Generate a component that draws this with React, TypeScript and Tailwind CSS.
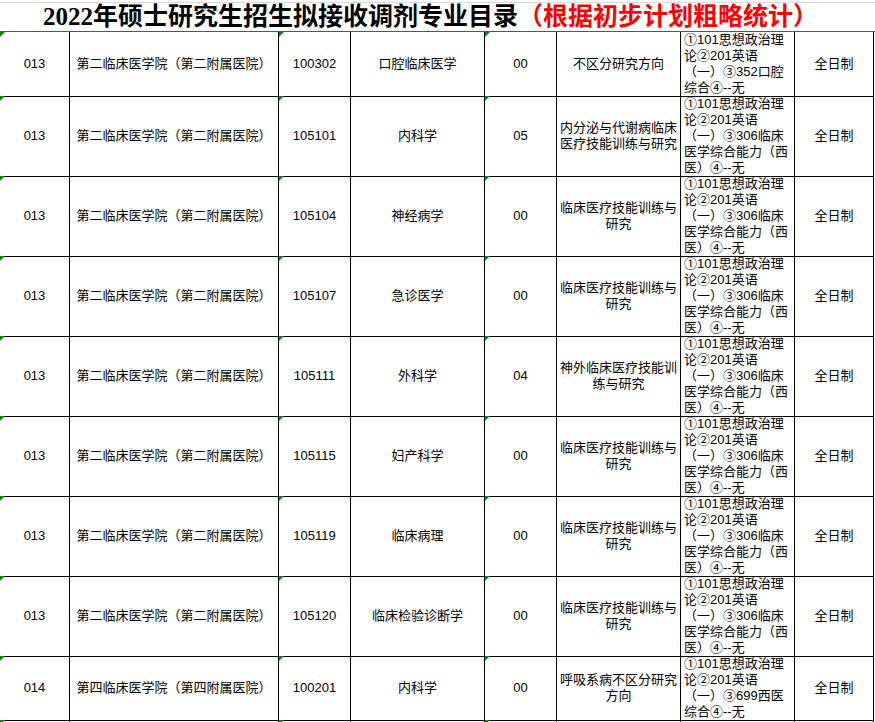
type Row = {
  dept: string
  school: string
  code: string
  major: string
  dir: string
  field: string[]
  exam: string[]
  mode: string
  tall: boolean
}

const exam306 = ["①101思想政治理", "论②201英语", "（一）③306临床", "医学综合能力（西", "医）④--无"]
const er = "第二临床医学院（第二附属医院）"

const rows: Row[] = [
  { dept: "013", school: er, code: "100302", major: "口腔临床医学", dir: "00", field: ["不区分研究方向"], exam: ["①101思想政治理", "论②201英语", "（一）③352口腔", "综合④--无"], mode: "全日制", tall: false },
  { dept: "013", school: er, code: "105101", major: "内科学", dir: "05", field: ["内分泌与代谢病临床", "医疗技能训练与研究"], exam: exam306, mode: "全日制", tall: true },
  { dept: "013", school: er, code: "105104", major: "神经病学", dir: "00", field: ["临床医疗技能训练与", "研究"], exam: exam306, mode: "全日制", tall: true },
  { dept: "013", school: er, code: "105107", major: "急诊医学", dir: "00", field: ["临床医疗技能训练与", "研究"], exam: exam306, mode: "全日制", tall: true },
  { dept: "013", school: er, code: "105111", major: "外科学", dir: "04", field: ["神外临床医疗技能训", "练与研究"], exam: exam306, mode: "全日制", tall: true },
  { dept: "013", school: er, code: "105115", major: "妇产科学", dir: "00", field: ["临床医疗技能训练与", "研究"], exam: exam306, mode: "全日制", tall: true },
  { dept: "013", school: er, code: "105119", major: "临床病理", dir: "00", field: ["临床医疗技能训练与", "研究"], exam: exam306, mode: "全日制", tall: true },
  { dept: "013", school: er, code: "105120", major: "临床检验诊断学", dir: "00", field: ["临床医疗技能训练与", "研究"], exam: exam306, mode: "全日制", tall: true },
  { dept: "014", school: "第四临床医学院（第四附属医院）", code: "100201", major: "内科学", dir: "00", field: ["呼吸系病不区分研究", "方向"], exam: ["①101思想政治理", "论②201英语", "（一）③699西医", "综合④--无"], mode: "全日制", tall: false },
]

const cols = "grid grid-cols-[70px_209px_72px_134px_72px_124px_114px_79px]"

function Flag() {
  return (
    <span className="absolute left-0 top-0 h-0 w-0 border-r-[5px] border-t-[5px] border-r-transparent border-t-[#0a8a0a]" />
  )
}

function Cell({ children, flag }: { children?: React.ReactNode; flag?: boolean }) {
  return (
    <div className="relative flex items-center justify-center border-b border-r border-black text-center">
      {flag && <Flag />}
      {children}
    </div>
  )
}

export default function App() {
  return (
    <div
      className="h-[722px] w-[875px] overflow-hidden bg-white text-[13px] leading-[16px] text-black"
      style={{ fontFamily: '"Liberation Sans", "Noto Sans CJK SC", sans-serif' }}
    >
      <div className="relative flex h-[32px] items-center justify-center border-b border-[#555] pr-[14px]">
        <div className="absolute left-0 right-0 top-[2px] border-t border-[#d9d9d9]" />
        <div
          className="relative pt-[2px] text-[25px] font-bold leading-[28px]"
          style={{ fontFamily: '"Liberation Serif", "Noto Sans CJK SC", serif' }}
        >
          <span>2022年硕士研究生招生拟接收调剂专业目录</span>
          <span className="text-[#ff0000]">（根据初步计划粗略统计）</span>
        </div>
      </div>

      {rows.map((r, i) => (
        <div key={i} className={`${cols} ${r.tall ? "h-[80px]" : "h-[64px]"}`}>
          <Cell flag>{r.dept}</Cell>
          <Cell>{r.school}</Cell>
          <Cell flag>{r.code}</Cell>
          <Cell>{r.major}</Cell>
          <Cell flag>{r.dir}</Cell>
          <Cell>
            <div className="flex flex-col">
              {r.field.map((f) => (
                <span key={f}>{f}</span>
              ))}
            </div>
          </Cell>
          <div className="flex flex-col justify-start border-b border-r border-black pl-[3px] text-left">
            {r.exam.map((e) => (
              <span key={e} className="whitespace-nowrap">{e}</span>
            ))}
          </div>
          <Cell>{r.mode}</Cell>
        </div>
      ))}

      <div className={`${cols} h-[40px]`}>
        <Cell flag />
        <Cell />
        <Cell flag />
        <Cell />
        <Cell flag />
        <Cell />
        <Cell />
        <Cell />
      </div>
    </div>
  )
}
